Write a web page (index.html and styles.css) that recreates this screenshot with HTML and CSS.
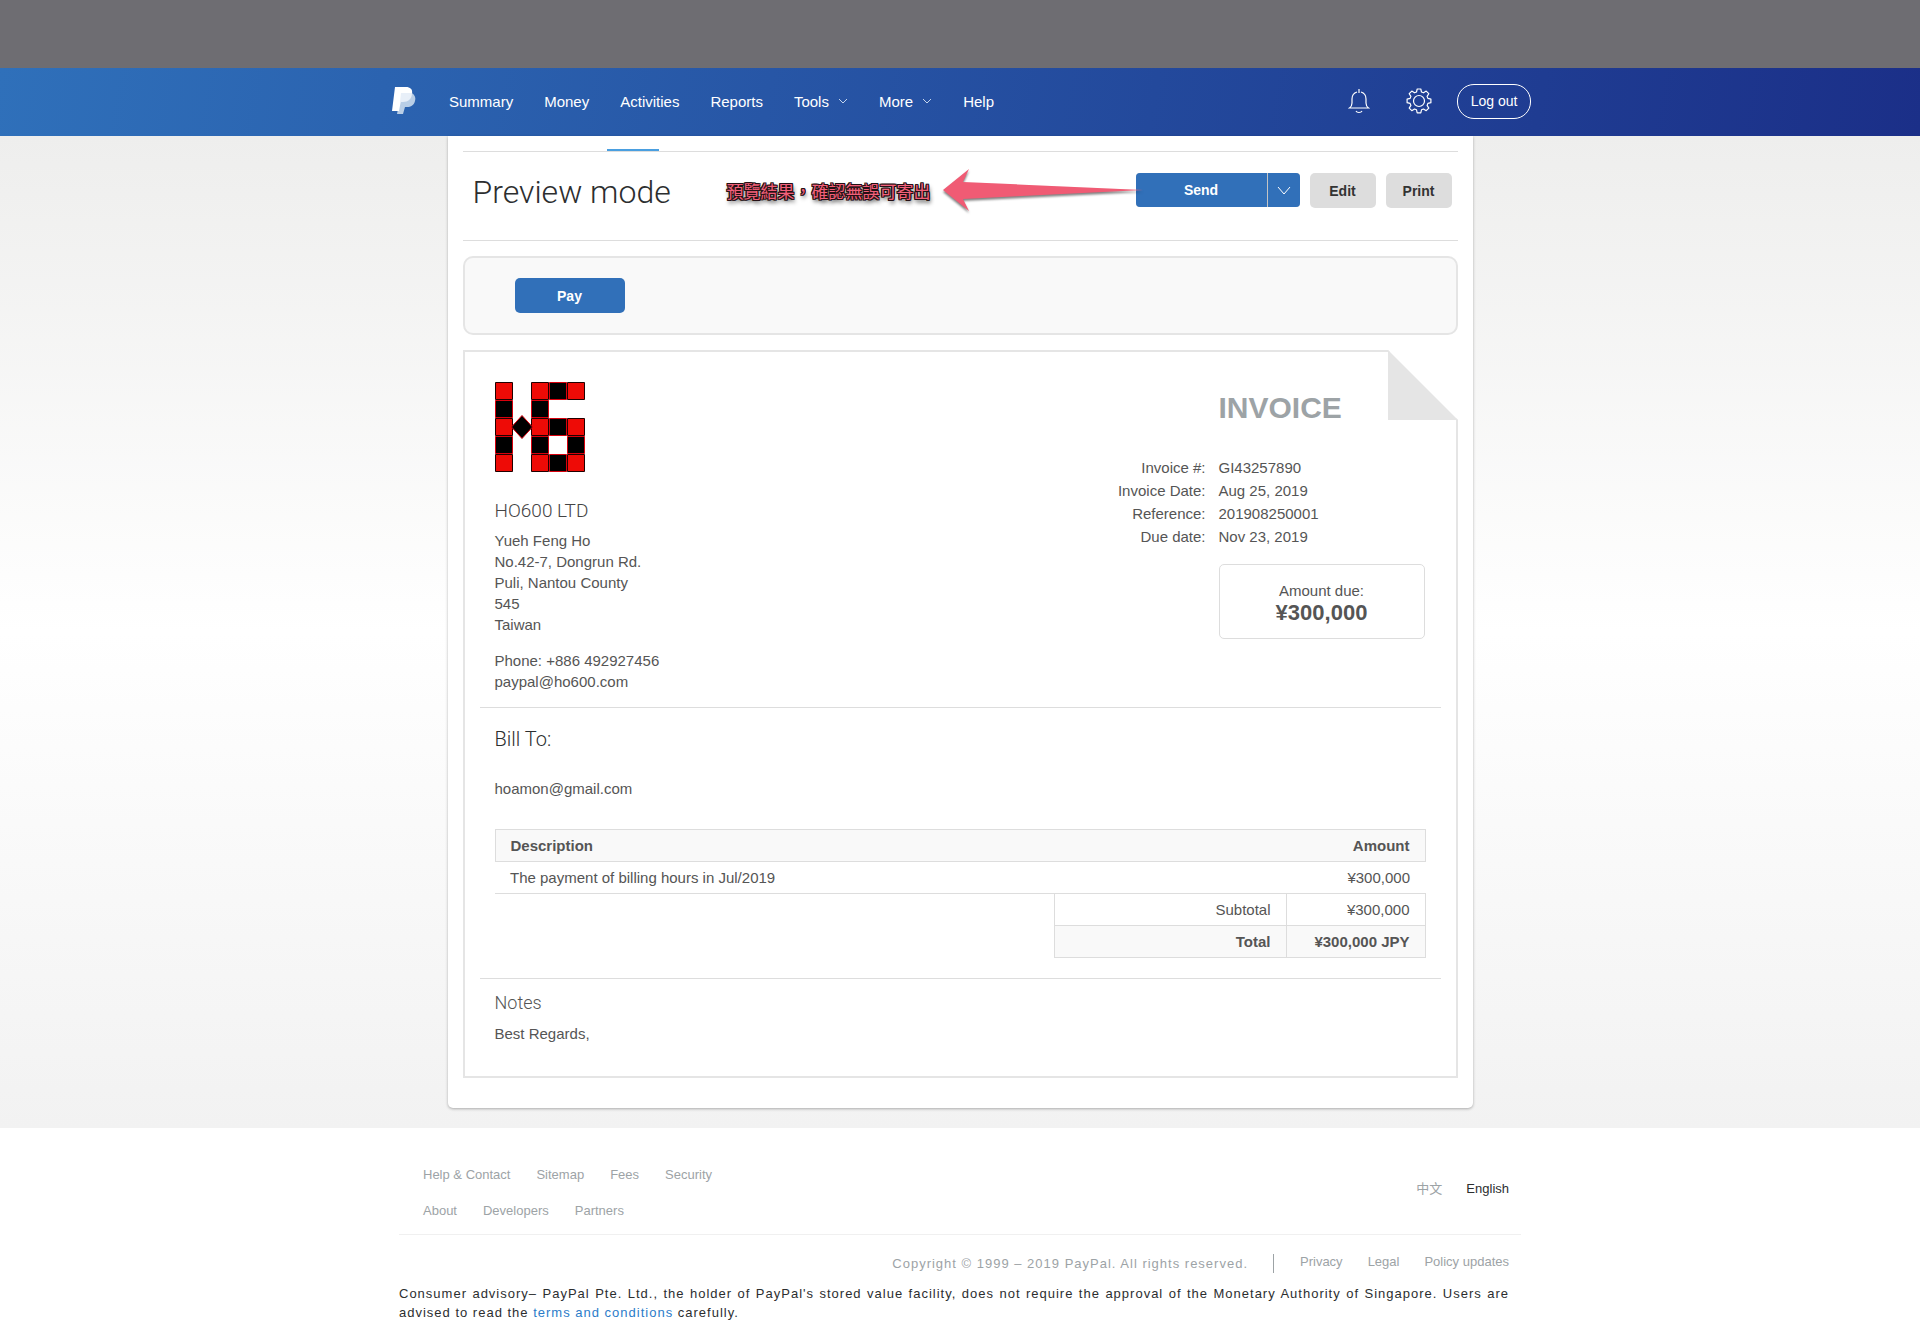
FILE: index.html
```html
<!DOCTYPE html>
<html lang="en">
<head>
<meta charset="utf-8">
<title>Preview invoice - PayPal</title>
<link rel="stylesheet" href="styles.css">
</head>
<body>
<div class="backdrop"></div>
<header class="topbar">
  <div class="topbar-inner">
    <a class="brand" href="#" aria-label="PayPal">
      <svg width="24" height="28" viewBox="0 0 24 28"><path d="M9 6h11c3 2 4 5 3 8-1 4-4 6-8 6h-2l-2 7H5z" fill="#b9cee6"/><path d="M3 0h11c4 0 7 2 6 7l-10 1-3 16H0z" fill="#fff"/><path d="M9 6h11c0 6-4 9-9 9H8z" fill="#e8eff8"/></svg>
    </a>
    <nav class="main-nav">
      <a href="#">Summary</a>
      <a href="#">Money</a>
      <a href="#">Activities</a>
      <a href="#">Reports</a>
      <a href="#">Tools <svg class="caret" width="10" height="6" viewBox="0 0 10 6"><path d="M1 1l4 4 4-4"/></svg></a>
      <a href="#">More <svg class="caret" width="10" height="6" viewBox="0 0 10 6"><path d="M1 1l4 4 4-4"/></svg></a>
      <a href="#">Help</a>
    </nav>
    <div class="tools">
      <a href="#" aria-label="Notifications"><svg class="line-icon" width="22" height="26" viewBox="0 0 22 26"><path d="M11 1v4M9 4C5.500 5 4 8 4 11v4c0 2-1 4-2.500 5h19c-1.500-1-2.500-3-2.500-5v-4c0-3-1.500-6-5-7M8 23c1 2 5 2 6 0"/></svg></a>
      <a href="#" aria-label="Settings"><svg class="line-icon" width="26" height="26" viewBox="0 0 26 26"><circle cx="13" cy="13" r="5.500"/><path stroke-linejoin="round" d="M11.200 1h3.600l.7 3 2 .8 2.700-1.700 2.600 2.600-1.700 2.700.8 2 3 .7v3.600l-3 .7-.8 2 1.700 2.700-2.600 2.600-2.700-1.700-2 .8-.7 3h-3.600l-.7-3-2-.8-2.700 1.700-2.600-2.600 1.700-2.700-.8-2-3-.7v-3.600l3-.7.8-2-1.700-2.700 2.600-2.600 2.700 1.700 2-.8z"/></svg></a>
      <button class="logout" type="button">Log out</button>
    </div>
  </div>
</header>

<main class="page">
  <section class="card">
    <div class="tabs"><span class="tab-active"></span></div>
    <div class="heading">
      <h1>Preview mode</h1>
      <div class="actions">
        <div class="split">
          <button class="send" type="button">Send</button>
          <button class="send-more" type="button" aria-label="More send options"><svg width="14" height="9" viewBox="0 0 14 9"><path d="M1 1l6 7 6-7"/></svg></button>
        </div>
        <button class="secondary" type="button">Edit</button>
        <button class="secondary" type="button">Print</button>
      </div>
      <div class="callout">
        <span>預覽結果，確認無誤可寄出</span>
        <svg width="202" height="46" viewBox="0 0 202 46"><path d="M1 22L27 1l-6 13 180 8-180 9 6 12z"/></svg>
      </div>
    </div>

    <div class="pay-box"><button class="pay" type="button">Pay</button></div>

    <article class="invoice">
      <svg class="fold" width="70" height="70" viewBox="0 0 70 70"><path d="M0 0h70v70z" fill="#fff"/><path d="M0 0l70 70H0z" fill="#e5e5e5"/></svg>
      <div class="invoice-top">
        <div class="seller">
          <svg class="seller-logo" width="90" height="90" viewBox="0 0 90 90" role="img" aria-label="HO600">
            <g fill="#ee0b06" stroke="#200000">
              <path d="M.5.5h17v17H.5zM.5 36.500h17v17H.5zM.5 72.500h17v17H.5zM36.500.5h17v17h-17zM72.500.5h17v17h-17zM36.500 36.500h17v17h-17zM72.500 36.500h17v17h-17zM36.500 72.500h17v17h-17zM72.500 72.500h17v17h-17z"/>
            </g>
            <g fill="#000" stroke="#d8000c">
              <path d="M.5 18.500h17v17H.5zM.5 54.500h17v17H.5zM36.500 18.500h17v17h-17zM36.500 54.500h17v17h-17zM54.500.5h17v17h-17zM54.500 36.500h17v17h-17zM54.500 72.500h17v17h-17zM72.500 54.500h17v17h-17zM27 33.500l10.500 11.500L27 56.500 16.500 45z"/>
            </g>
          </svg>
          <h2 class="seller-name">HO600 LTD</h2>
          <address>Yueh Feng Ho<br>No.42-7, Dongrun Rd.<br>Puli, Nantou County<br>545<br>Taiwan</address>
          <p class="contact">Phone: +886 492927456<br>paypal@ho600.com</p>
        </div>
        <div class="summary">
          <h2 class="invoice-title">INVOICE</h2>
          <dl>
            <dt>Invoice #:</dt><dd>GI43257890</dd>
            <dt>Invoice Date:</dt><dd>Aug 25, 2019</dd>
            <dt>Reference:</dt><dd>201908250001</dd>
            <dt>Due date:</dt><dd>Nov 23, 2019</dd>
          </dl>
          <div class="due"><span>Amount due:</span><strong>¥300,000</strong></div>
        </div>
      </div>
      <section class="bill">
        <h3>Bill To:</h3>
        <p>hoamon@gmail.com</p>
        <table>
          <colgroup><col><col class="col-label"><col class="col-amount"></colgroup>
          <thead><tr><th colspan="2">Description</th><th class="num">Amount</th></tr></thead>
          <tbody>
            <tr class="item"><td colspan="2">The payment of billing hours in Jul/2019</td><td class="num">¥300,000</td></tr>
            <tr class="sum"><td class="blank"></td><td>Subtotal</td><td>¥300,000</td></tr>
            <tr class="sum total"><td class="blank"></td><td>Total</td><td>¥300,000 JPY</td></tr>
          </tbody>
        </table>
      </section>
      <section class="notes">
        <h3>Notes</h3>
        <p>Best Regards,</p>
      </section>
    </article>
  </section>
</main>

<footer class="footer">
  <div class="footer-inner">
    <div class="footer-top">
      <nav class="footer-links">
        <div><a href="#">Help &amp; Contact</a><a href="#">Sitemap</a><a href="#">Fees</a><a href="#">Security</a></div>
        <div><a href="#">About</a><a href="#">Developers</a><a href="#">Partners</a></div>
      </nav>
      <div class="langs"><a href="#" lang="zh">中文</a><a class="current" href="#">English</a></div>
    </div>
    <div class="legal">
      <span class="copyright">Copyright © 1999 – 2019 PayPal. All rights reserved.</span>
      <nav><a href="#">Privacy</a><a href="#">Legal</a><a href="#">Policy updates</a></nav>
    </div>
    <p class="advisory">Consumer advisory– PayPal Pte. Ltd., the holder of PayPal's stored value facility, does not require the approval of the Monetary Authority of Singapore. Users are advised to read the <a href="#">terms and conditions</a> carefully.</p>
  </div>
</footer>
</body>
</html>
```

FILE: styles.css
```css
* { box-sizing: border-box; }
body {
  margin: 0;
  background: #fff;
  color: #555;
  font: 15px/21px "Liberation Sans", Arial, "Noto Sans CJK TC", sans-serif;
}
h1, h2, h3, p, dl, dd { margin: 0; }
a { color: inherit; text-decoration: none; }
button { font: bold 14px/20px "Liberation Sans", Arial, sans-serif; border: 0; padding: 0; cursor: pointer; }

.backdrop { height: 68px; background: #6e6d72; }

.topbar { background: linear-gradient(100deg, #2f70ba 0%, #1b2f88 100%); color: #fff; }
.topbar-inner {
  display: flex;
  align-items: center;
  max-width: 1142px;
  height: 68px;
  margin: 0 auto;
  padding: 0 0 2px 3px;
}
.brand { display: flex; margin-right: 33px; }
.main-nav { display: flex; gap: 31px; }
.main-nav a { display: flex; align-items: center; gap: 9px; }
.caret { fill: none; stroke: #c4d5ec; }
.tools { display: flex; align-items: center; margin-left: auto; }
.tools a { display: flex; margin-right: 36px; }
.tools a + a { margin-right: 25px; }
.line-icon { fill: none; stroke: #fff; stroke-width: 1.200; }
.logout {
  width: 74px;
  height: 35px;
  border: 1px solid #fff;
  border-radius: 17px;
  background: transparent;
  color: #fff;
  font-weight: normal;
}

.page {
  padding: 0 16px 20px;
  background: linear-gradient(#eeeeed 0%, #fff 50%, #f2f2f2 100%);
}
.card {
  max-width: 1025px;
  margin: 0 auto;
  padding: 0 15px 30px;
  background: #fff;
  border-radius: 0 0 5px 5px;
  box-shadow: 0 1px 3px rgba(0, 0, 0, 0.300);
}
.tabs { height: 16px; padding: 13px 0 0 144px; border-bottom: 1px solid #ddd; }
.tab-active { display: block; width: 52px; height: 2px; background: #4a9fe0; }

.heading {
  position: relative;
  display: flex;
  align-items: flex-start;
  justify-content: space-between;
  height: 89px;
  padding: 21px 6px 0 10px;
  border-bottom: 1px solid #ddd;
}
h1 { color: #2c2e2f; font: 300 32px/38px Roboto, "Liberation Sans", sans-serif; }
.actions { display: flex; gap: 10px; align-items: flex-start; }
.split { display: flex; gap: 1px; background: #c4c4c4; border-radius: 4px; }
.split button, .pay { background: #3170b9; color: #fff; }
.send { width: 131px; height: 34px; border-radius: 4px 0 0 4px; }
.send-more { display: grid; place-items: center; width: 32px; height: 34px; border-radius: 0 4px 4px 0; }
.send-more path { fill: none; stroke: #fff; }
.secondary { width: 66px; height: 35px; border-radius: 5px; background: #ddd; color: #333; }
.callout {
  position: absolute;
  left: 264px;
  top: 16px;
  display: flex;
  align-items: center;
  gap: 11px;
  pointer-events: none;
}
.callout span {
  color: #f2607a;
  font: 400 17px/24px "Noto Sans CJK TC", sans-serif;
  text-shadow:
    1px 0 #251014, -1px 0 #251014, 0 1px #251014, 0 -1px #251014,
    1px 1px #251014, -1px 1px #251014, 1px -1px #251014, -1px -1px #251014,
    1px 3px 4px #000;
  white-space: nowrap;
}
.callout svg { filter: drop-shadow(0 2px 1px rgba(0, 0, 0, 0.500)); }
.callout path { fill: #f05b74; }

.pay-box {
  margin: 15px 0;
  padding: 20px 50px;
  border: 2px solid #e5e5e5;
  border-radius: 10px;
  background: #f9f9f9;
}
.pay { display: block; width: 110px; height: 35px; border-radius: 5px; }

.invoice { position: relative; padding: 0 15px 32px; border: 2px solid #e5e5e5; }
.fold { position: absolute; top: -2px; right: -2px; }
.invoice-top {
  display: flex;
  justify-content: space-between;
  padding: 30px 16px 15px 15px;
  border-bottom: 1px solid #ddd;
}
.seller-logo { display: block; }
.seller-name { margin: 28px 0 8px; font: 300 19px/22px Roboto, "Liberation Sans", sans-serif; color: #444; }
address { font-style: normal; }
.contact { margin-top: 15px; }
.invoice-title { padding: 8px 0 30px 105px; color: #9da3a6; font-size: 30px; line-height: 36px; }
.summary { width: 311px; }
dl { display: grid; grid-template-columns: 92px 1fr; column-gap: 13px; line-height: 23px; }
dt { text-align: right; white-space: nowrap; justify-self: end; }
.due {
  display: flex;
  flex-direction: column;
  align-items: center;
  margin: 16px 0 0 105px;
  padding: 15px 0 13px;
  border: 1px solid #ddd;
  border-radius: 5px;
}
.due strong { font-size: 22px; line-height: 24px; }

.bill { padding: 20px 15px; border-bottom: 1px solid #ddd; }
h3 { font: 300 18px/22px Roboto, "Liberation Sans", sans-serif; }
.bill h3 { color: #2c2e2f; font-size: 20px; }
.bill p { margin: 28px 0 30px; }
table { width: 100%; table-layout: fixed; border-collapse: collapse; }
.col-label { width: 231px; }
.col-amount { width: 139px; }
th, td { height: 32px; padding: 0 15px; text-align: left; }
thead { background: #f9f9f9; }
thead tr { border: 1px solid #ddd; }
.item { border-bottom: 1px solid #ddd; }
.num { text-align: right; }
.sum td { text-align: right; border: 1px solid #ddd; }
.sum .blank { border-width: 0 1px 0 0; background: #fff; }
.total { font-weight: bold; background: #f9f9f9; }
.notes { padding: 13px 15px 0; }
.notes p { margin-top: 9px; }

.footer { padding: 37px 16px 8px; color: #9da3a6; font-size: 13px; line-height: 20px; }
.footer-inner { max-width: 1122px; margin: 0 auto; }
.footer-top {
  display: flex;
  align-items: center;
  justify-content: space-between;
  padding: 0 12px 13px 24px;
  border-bottom: 1px solid #f0f0f0;
}
.footer-links { display: grid; gap: 16px; }
.footer-links div { display: flex; gap: 26px; }
.langs { display: flex; gap: 24px; padding-bottom: 8px; }
.langs .current { color: #2c2e2f; }
.legal { display: flex; justify-content: flex-end; padding: 19px 12px 0 0; }
.legal nav { display: flex; gap: 25px; height: 19px; margin-left: 25px; padding-left: 26px; border-left: 1px solid #9da3a6; line-height: 16px; }
.copyright { letter-spacing: 1px; }
.advisory { margin: 10px 12px 0 0; color: #2c2e2f; line-height: 19px; letter-spacing: 1px; text-align: justify; }
.advisory a { color: #2b7cc9; }
```
